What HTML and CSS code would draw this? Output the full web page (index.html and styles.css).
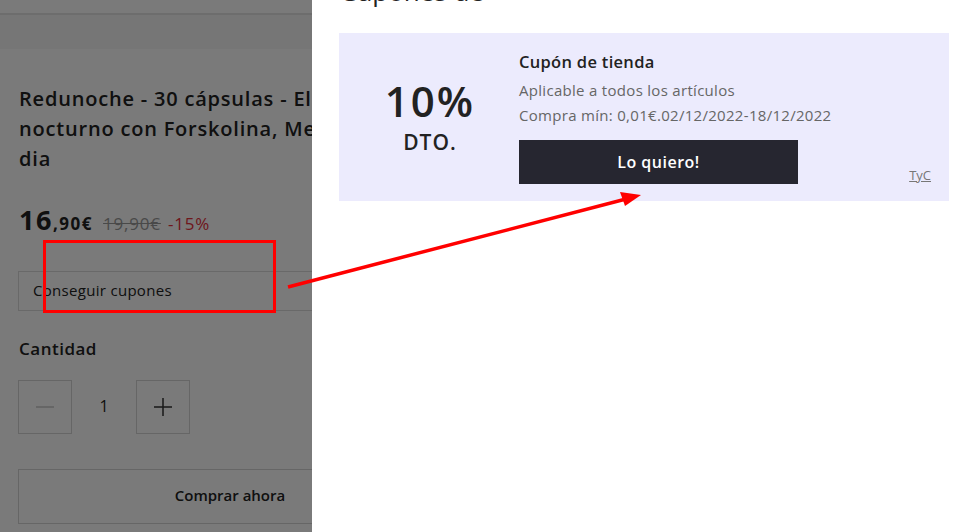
FILE: index.html
```html
<!DOCTYPE html>
<html lang="es">
  <head>
    <meta charset="UTF-8" />
    <meta name="viewport" content="width=device-width, initial-scale=1.0" />
    <title>Redunoche - Cupones</title>
    <link rel="stylesheet" href="styles.css">
  </head>
  <body>
    <div class="page">
      <div class="topbar"></div>
      <div class="subbar"></div>
      <div class="product">
        <h1 class="product-title">
          Redunoche - 30 cápsulas - Eliminador de<br />
          nocturno con Forskolina, Melatonina y<br />
          dia
        </h1>
        <div class="price-row">
          <span class="price-int">16</span><span class="price-dec">,90€</span>
          <span class="price-old">19,90€</span>
          <span class="price-off">-15%</span>
        </div>
        <div class="coupon-link">Conseguir cupones</div>
        <div class="qty-label">Cantidad</div>
        <div class="qty-row">
          <button class="qty-btn qty-disabled">
            <svg width="20" height="20" viewBox="0 0 20 20"><path d="M1 10h18" stroke="currentColor" stroke-width="1.5"/></svg>
          </button>
          <span class="qty-value">1</span>
          <button class="qty-btn">
            <svg width="20" height="20" viewBox="0 0 20 20"><path d="M1 10h18M10 1v18" stroke="currentColor" stroke-width="1.5"/></svg>
          </button>
        </div>
        <button class="buy-btn">Comprar ahora</button>
      </div>
    </div>

    <div class="overlay"></div>

    <aside class="drawer">
      <h2 class="drawer-title">Cupones de</h2>
      <div class="coupon">
        <div class="coupon-value">
          <div class="coupon-pct">10%</div>
          <div class="coupon-dto">DTO.</div>
        </div>
        <div class="coupon-info">
          <div class="coupon-name">Cupón de tienda</div>
          <div class="coupon-text">Aplicable a todos los artículos</div>
          <div class="coupon-text">Compra mín: 0,01€.02/12/2022-18/12/2022</div>
          <div class="coupon-actions">
            <button class="coupon-btn">Lo quiero!</button>
            <a class="coupon-tyc" href="#">TyC</a>
          </div>
        </div>
      </div>
    </aside>

    <svg class="markup" width="960" height="532" viewBox="0 0 960 532">
      <rect x="44.5" y="241.5" width="230" height="70" fill="none" stroke="#ff0000" stroke-width="3"/>
      <path d="M288 287 L626 199" stroke="#ff0000" stroke-width="3.5" fill="none"/>
      <path d="M641 195 L620 192 L625 206 Z" fill="#ff0000"/>
    </svg>
  </body>
</html>
```

FILE: styles.css
```css
body {
  font-family: "Open Sans", "Noto Sans", sans-serif;
  margin: 0;
  padding: 0;
  color: #222;
  background: #fff;
  overflow: hidden;
}

.topbar {
  height: 13px;
  border-bottom: 2px solid #e3e3e3;
}

.subbar {
  height: 34px;
  background-color: #f6f6f6;
}

.product {
  width: 424px;
  padding: 35px 0 0 18px;
}

.product-title {
  width: 293px;
  overflow: hidden;
  font-size: 20px;
  font-weight: 600;
  line-height: 30px;
  letter-spacing: 0.8px;
  margin: 0 0 0 1px;
  white-space: nowrap;
  color: #222;
}

.price-row {
  margin-top: 30px;
  height: 32px;
  line-height: 32px;
  padding-left: 1px;
  white-space: nowrap;
}

.price-int {
  font-size: 27px;
  font-weight: 700;
  letter-spacing: 1.5px;
}

.price-dec {
  font-size: 17px;
  font-weight: 700;
  letter-spacing: 1.5px;
}

.price-old {
  font-size: 17px;
  color: #9a9a9a;
  text-decoration: line-through;
  letter-spacing: 0.8px;
  margin-left: 6px;
}

.price-off {
  font-size: 17px;
  color: #e8303c;
  letter-spacing: 0.8px;
  margin-left: 3px;
}

.coupon-link {
  margin-top: 35px;
  height: 38px;
  line-height: 36px;
  border: 1px solid #dcdcdc;
  padding-left: 14px;
  font-size: 15px;
  letter-spacing: 0.3px;
}

.qty-label {
  margin-top: 26px;
  font-size: 17px;
  font-weight: 600;
  line-height: 24px;
  letter-spacing: 0.5px;
  padding-left: 1px;
}

.qty-row {
  margin-top: 19px;
  display: flex;
  align-items: center;
}

.qty-btn {
  width: 54px;
  height: 54px;
  border: 1px solid #d6d6d6;
  background: #fff;
  display: flex;
  align-items: center;
  justify-content: center;
  color: #333;
  padding: 0;
}

.qty-disabled {
  color: #c9c9c9;
}

.qty-value {
  width: 64px;
  text-align: center;
  font-size: 16px;
  line-height: 20px;
  margin-top: -2px;
}

.buy-btn {
  margin-top: 35px;
  width: 424px;
  height: 55px;
  border: 1px solid #d6d6d6;
  background: #fff;
  font-family: inherit;
  font-size: 15px;
  font-weight: 600;
  color: #222;
  padding-bottom: 4px;
}

.overlay {
  position: fixed;
  inset: 0;
  background: rgba(0, 0, 0, 0.52);
}

.drawer {
  position: fixed;
  top: 0;
  right: 0;
  bottom: 0;
  width: 648px;
  background: #fff;
  padding: 0 11px 0 27px;
  box-sizing: border-box;
}

.drawer-title {
  font-size: 26px;
  font-weight: 400;
  line-height: 36px;
  margin: -27px 0 24px 1px;
  color: #222;
}

.coupon {
  display: flex;
  background-color: #ecebfd;
  height: 168px;
  box-sizing: border-box;
  padding: 18px 18px 17px 0;
}

.coupon-value {
  width: 182px;
  display: flex;
  flex-direction: column;
  align-items: center;
  justify-content: center;
  margin-top: -4px;
}

.coupon-pct {
  font-size: 42px;
  font-weight: 600;
  line-height: 50px;
  letter-spacing: 2px;
  color: #222;
}

.coupon-dto {
  font-size: 21px;
  font-weight: 600;
  line-height: 28px;
  letter-spacing: 1px;
  margin-top: 2px;
  color: #222;
}

.coupon-info {
  flex: 1;
  display: flex;
  flex-direction: column;
  margin-left: -2px;
}

.coupon-name {
  font-size: 16.5px;
  font-weight: 600;
  line-height: 22px;
  letter-spacing: 0.3px;
  margin-bottom: 5px;
}

.coupon-text {
  font-size: 15px;
  line-height: 25px;
  letter-spacing: 0.3px;
  color: #666;
}

.coupon-actions {
  display: flex;
  align-items: flex-end;
  justify-content: space-between;
  margin-top: 12px;
}

.coupon-btn {
  width: 279px;
  height: 44px;
  border: none;
  background: #262630;
  color: #fff;
  font-family: inherit;
  font-size: 16px;
  font-weight: 600;
  letter-spacing: 0.5px;
  padding-bottom: 2px;
}

.coupon-tyc {
  font-size: 13px;
  color: #777;
  margin-bottom: 0;
}

.markup {
  position: fixed;
  top: 0;
  left: 0;
  pointer-events: none;
}
```
